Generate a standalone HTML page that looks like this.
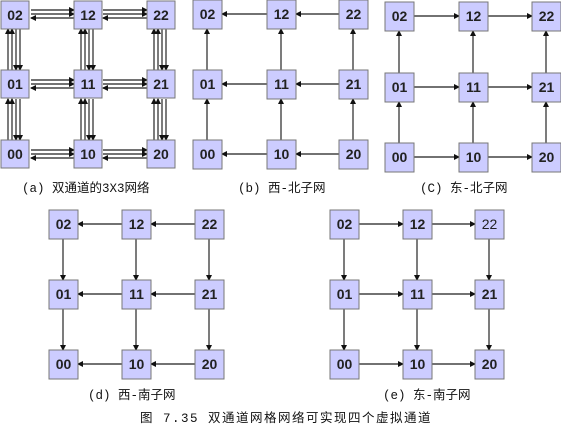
<!DOCTYPE html>
<html><head><meta charset="utf-8"><style>
html,body{margin:0;padding:0;background:#fff;width:561px;height:431px;overflow:hidden}
svg{position:absolute;left:0;top:0}
.b{fill:#ccccff;stroke:#777;stroke-width:1}
.t{font-family:"Liberation Sans",sans-serif;font-weight:bold;font-size:14px;fill:#222;text-anchor:middle}
.c{font-family:"Liberation Mono","Noto Sans CJK SC",monospace;font-size:12.5px;fill:#111}
line{stroke:#444;stroke-width:1.4}
</style></head><body>
<svg width="561" height="431" viewBox="0 0 561 431">
<defs><marker id="m" markerWidth="6" markerHeight="6" refX="5" refY="3" orient="auto" markerUnits="userSpaceOnUse"><path d="M0,0 L6,3 L0,6 z" fill="#111"/></marker></defs>

<g>
<g marker-end="url(#m)">
<line x1="31" y1="10" x2="74" y2="10"/><line x1="31" y1="14" x2="74" y2="14"/><line x1="74" y1="18" x2="31" y2="18"/>
<line x1="103" y1="10" x2="147" y2="10"/><line x1="103" y1="14" x2="147" y2="14"/><line x1="147" y1="18" x2="103" y2="18"/>
<line x1="31" y1="80" x2="74" y2="80"/><line x1="31" y1="84" x2="74" y2="84"/><line x1="74" y1="88" x2="31" y2="88"/>
<line x1="103" y1="80" x2="147" y2="80"/><line x1="103" y1="84" x2="147" y2="84"/><line x1="147" y1="88" x2="103" y2="88"/>
<line x1="31" y1="150" x2="74" y2="150"/><line x1="31" y1="154" x2="74" y2="154"/><line x1="74" y1="158" x2="31" y2="158"/>
<line x1="103" y1="150" x2="147" y2="150"/><line x1="103" y1="154" x2="147" y2="154"/><line x1="147" y1="158" x2="103" y2="158"/>
<line x1="8" y1="70" x2="8" y2="29"/><line x1="12" y1="70" x2="12" y2="29"/><line x1="16" y1="29" x2="16" y2="70"/><line x1="20" y1="29" x2="20" y2="70"/>
<line x1="8" y1="140" x2="8" y2="99"/><line x1="12" y1="140" x2="12" y2="99"/><line x1="16" y1="99" x2="16" y2="140"/><line x1="20" y1="99" x2="20" y2="140"/>
<line x1="81" y1="70" x2="81" y2="29"/><line x1="85" y1="70" x2="85" y2="29"/><line x1="89" y1="29" x2="89" y2="70"/><line x1="93" y1="29" x2="93" y2="70"/>
<line x1="81" y1="140" x2="81" y2="99"/><line x1="85" y1="140" x2="85" y2="99"/><line x1="89" y1="99" x2="89" y2="140"/><line x1="93" y1="99" x2="93" y2="140"/>
<line x1="154" y1="70" x2="154" y2="29"/><line x1="158" y1="70" x2="158" y2="29"/><line x1="162" y1="29" x2="162" y2="70"/><line x1="166" y1="29" x2="166" y2="70"/>
<line x1="154" y1="140" x2="154" y2="99"/><line x1="158" y1="140" x2="158" y2="99"/><line x1="162" y1="99" x2="162" y2="140"/><line x1="166" y1="99" x2="166" y2="140"/>
</g>
<rect class="b" x="1" y="1" width="28" height="28"/><text class="t" x="15" y="20">02</text>
<rect class="b" x="74" y="1" width="28" height="28"/><text class="t" x="88" y="20">12</text>
<rect class="b" x="147" y="1" width="28" height="28"/><text class="t" x="161" y="20">22</text>
<rect class="b" x="1" y="70" width="28" height="28"/><text class="t" x="15" y="89">01</text>
<rect class="b" x="74" y="70" width="28" height="28"/><text class="t" x="88" y="89">11</text>
<rect class="b" x="147" y="70" width="28" height="28"/><text class="t" x="161" y="89">21</text>
<rect class="b" x="1" y="140" width="28" height="28"/><text class="t" x="15" y="159">00</text>
<rect class="b" x="74" y="140" width="28" height="28"/><text class="t" x="88" y="159">10</text>
<rect class="b" x="147" y="140" width="28" height="28"/><text class="t" x="161" y="159">20</text>
<text class="c" x="22" y="192">(a) 双通道的3X3网络</text>
</g>

<g marker-end="url(#m)">
<line x1="267" y1="14" x2="222" y2="14"/><line x1="339" y1="14" x2="296" y2="14"/>
<line x1="267" y1="84" x2="222" y2="84"/><line x1="339" y1="84" x2="296" y2="84"/>
<line x1="267" y1="154" x2="222" y2="154"/><line x1="339" y1="154" x2="296" y2="154"/>
<line x1="207" y1="70" x2="207" y2="29"/><line x1="207" y1="140" x2="207" y2="99"/>
<line x1="281" y1="70" x2="281" y2="29"/><line x1="281" y1="140" x2="281" y2="99"/>
<line x1="353" y1="70" x2="353" y2="29"/><line x1="353" y1="140" x2="353" y2="99"/>
</g>
<g>
<rect class="b" x="193" y="0" width="29" height="29"/><text class="t" x="207.5" y="19">02</text>
<rect class="b" x="267" y="0" width="29" height="29"/><text class="t" x="281.5" y="19">12</text>
<rect class="b" x="339" y="0" width="29" height="29"/><text class="t" x="353.5" y="19">22</text>
<rect class="b" x="193" y="70" width="29" height="29"/><text class="t" x="207.5" y="89">01</text>
<rect class="b" x="267" y="70" width="29" height="29"/><text class="t" x="281.5" y="89">11</text>
<rect class="b" x="339" y="70" width="29" height="29"/><text class="t" x="353.5" y="89">21</text>
<rect class="b" x="193" y="140" width="29" height="29"/><text class="t" x="207.5" y="159">00</text>
<rect class="b" x="267" y="140" width="29" height="29"/><text class="t" x="281.5" y="159">10</text>
<rect class="b" x="339" y="140" width="29" height="29"/><text class="t" x="353.5" y="159">20</text>
<text class="c" x="238" y="192">(b) 西-北子网</text>
</g>

<g marker-end="url(#m)">
<line x1="414" y1="16" x2="459" y2="16"/><line x1="488" y1="16" x2="532" y2="16"/>
<line x1="414" y1="87" x2="459" y2="87"/><line x1="488" y1="87" x2="532" y2="87"/>
<line x1="414" y1="157" x2="459" y2="157"/><line x1="488" y1="157" x2="532" y2="157"/>
<line x1="399" y1="73" x2="399" y2="31"/><line x1="399" y1="143" x2="399" y2="102"/>
<line x1="473" y1="73" x2="473" y2="31"/><line x1="473" y1="143" x2="473" y2="102"/>
<line x1="546" y1="73" x2="546" y2="31"/><line x1="546" y1="143" x2="546" y2="102"/>
</g>
<g>
<rect class="b" x="385" y="2" width="29" height="29"/><text class="t" x="399.5" y="21">02</text>
<rect class="b" x="459" y="2" width="29" height="29"/><text class="t" x="473.5" y="21">12</text>
<rect class="b" x="532" y="2" width="29" height="29"/><text class="t" x="546.5" y="21">22</text>
<rect class="b" x="385" y="73" width="29" height="29"/><text class="t" x="399.5" y="92">01</text>
<rect class="b" x="459" y="73" width="29" height="29"/><text class="t" x="473.5" y="92">11</text>
<rect class="b" x="532" y="73" width="29" height="29"/><text class="t" x="546.5" y="92">21</text>
<rect class="b" x="385" y="143" width="29" height="29"/><text class="t" x="399.5" y="162">00</text>
<rect class="b" x="459" y="143" width="29" height="29"/><text class="t" x="473.5" y="162">10</text>
<rect class="b" x="532" y="143" width="29" height="29"/><text class="t" x="546.5" y="162">20</text>
<text class="c" x="420" y="192">(C)  东-北子网</text>
</g>

<g marker-end="url(#m)">
<line x1="122" y1="224" x2="78" y2="224"/><line x1="195" y1="224" x2="151" y2="224"/>
<line x1="122" y1="294" x2="78" y2="294"/><line x1="195" y1="294" x2="151" y2="294"/>
<line x1="122" y1="364" x2="78" y2="364"/><line x1="195" y1="364" x2="151" y2="364"/>
<line x1="63" y1="239" x2="63" y2="280"/><line x1="63" y1="309" x2="63" y2="350"/>
<line x1="136" y1="239" x2="136" y2="280"/><line x1="136" y1="309" x2="136" y2="350"/>
<line x1="209" y1="239" x2="209" y2="280"/><line x1="209" y1="309" x2="209" y2="350"/>
</g>
<g>
<rect class="b" x="49" y="210" width="29" height="29"/><text class="t" x="63.5" y="229">02</text>
<rect class="b" x="122" y="210" width="29" height="29"/><text class="t" x="136.5" y="229">12</text>
<rect class="b" x="195" y="210" width="29" height="29"/><text class="t" x="209.5" y="229">22</text>
<rect class="b" x="49" y="280" width="29" height="29"/><text class="t" x="63.5" y="299">01</text>
<rect class="b" x="122" y="280" width="29" height="29"/><text class="t" x="136.5" y="299">11</text>
<rect class="b" x="195" y="280" width="29" height="29"/><text class="t" x="209.5" y="299">21</text>
<rect class="b" x="49" y="350" width="29" height="29"/><text class="t" x="63.5" y="369">00</text>
<rect class="b" x="122" y="350" width="29" height="29"/><text class="t" x="136.5" y="369">10</text>
<rect class="b" x="195" y="350" width="29" height="29"/><text class="t" x="209.5" y="369">20</text>
<text class="c" x="88" y="399">(d)  西-南子网</text>
</g>

<g marker-end="url(#m)">
<line x1="359" y1="224" x2="403" y2="224"/><line x1="432" y1="224" x2="475" y2="224"/>
<line x1="359" y1="294" x2="403" y2="294"/><line x1="432" y1="294" x2="475" y2="294"/>
<line x1="359" y1="364" x2="403" y2="364"/><line x1="432" y1="364" x2="475" y2="364"/>
<line x1="344" y1="239" x2="344" y2="280"/><line x1="344" y1="309" x2="344" y2="350"/>
<line x1="417" y1="239" x2="417" y2="280"/><line x1="417" y1="309" x2="417" y2="350"/>
<line x1="489" y1="239" x2="489" y2="280"/><line x1="489" y1="309" x2="489" y2="350"/>
</g>
<g>
<rect class="b" x="330" y="210" width="29" height="29"/><text class="t" x="344.5" y="229">02</text>
<rect class="b" x="403" y="210" width="29" height="29"/><text class="t" x="417.5" y="229">12</text>
<rect class="b" x="475" y="210" width="29" height="29"/><text class="t" x="489.5" y="229" style="font-weight:normal">22</text>
<rect class="b" x="330" y="280" width="29" height="29"/><text class="t" x="344.5" y="299">01</text>
<rect class="b" x="403" y="280" width="29" height="29"/><text class="t" x="417.5" y="299">11</text>
<rect class="b" x="475" y="280" width="29" height="29"/><text class="t" x="489.5" y="299">21</text>
<rect class="b" x="330" y="350" width="29" height="29"/><text class="t" x="344.5" y="369">00</text>
<rect class="b" x="403" y="350" width="29" height="29"/><text class="t" x="417.5" y="369">10</text>
<rect class="b" x="475" y="350" width="29" height="29"/><text class="t" x="489.5" y="369">20</text>
<text class="c" x="383" y="399">(e)  东-南子网</text>
</g>

<text class="c" x="140" y="422" style="letter-spacing:1.5px">图 7.35 双通道网格网络可实现四个虚拟通道</text>
</svg>
</body></html>
